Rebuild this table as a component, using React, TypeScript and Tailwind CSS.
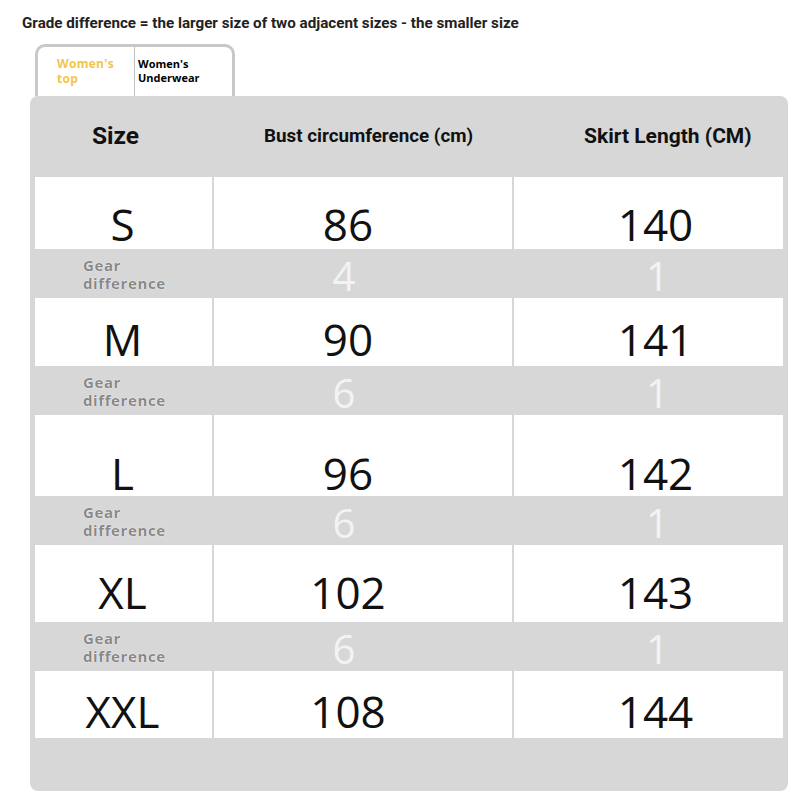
import React from 'react';

type Row = { size: string; bust: string; skirt: string; h: string; pt: string };

const rows: Row[] = [
  { size: 'S', bust: '86', skirt: '140', h: 'h-[72px]', pt: 'pt-[22px]' },
  { size: 'M', bust: '90', skirt: '141', h: 'h-[68px]', pt: 'pt-[14px]' },
  { size: 'L', bust: '96', skirt: '142', h: 'h-[81px]', pt: 'pt-[34px]' },
  { size: 'XL', bust: '102', skirt: '143', h: 'h-[77px]', pt: 'pt-[16px]' },
  { size: 'XXL', bust: '108', skirt: '144', h: 'h-[67px]', pt: 'pt-[12px]' },
];

const gaps = [
  { bust: '4', skirt: '1' },
  { bust: '6', skirt: '1' },
  { bust: '6', skirt: '1' },
  { bust: '6', skirt: '1' },
];

const condensed = { fontFamily: '"Roboto", "Liberation Sans", sans-serif' };

function SizeRow({ row }: { row: Row }) {
  const cell = `flex items-center justify-center bg-white text-[44px] leading-[1] text-[#111] ${row.h} ${row.pt}`;
  return (
    <div className="grid grid-cols-[177px_298px_269px] gap-x-[2px] px-[5px]">
      <div className={`${cell} pr-[2px]`}>{row.size}</div>
      <div className={`${cell} pr-[30px]`}>{row.bust}</div>
      <div className={`${cell} pl-[14px]`}>{row.skirt}</div>
    </div>
  );
}

function GearRow({ bust, skirt }: { bust: string; skirt: string }) {
  return (
    <div className="grid h-[49px] grid-cols-[177px_298px_269px] gap-x-[2px] px-[5px]">
      <div
        className="flex flex-col justify-center pl-[48px] text-[15px] font-bold leading-[18px] tracking-[0.6px] text-[#888]"
        style={{ textShadow: '0 0 1px #fff, 0 0 1px #fff' }}
      >
        <span>Gear</span>
        <span>difference</span>
      </div>
      <div className="flex items-center justify-center pr-[38px] pt-[4px] text-[40px] leading-[1] text-[#f3f3f3]">{bust}</div>
      <div className="flex items-center justify-center pl-[18px] pt-[4px] text-[40px] leading-[1] text-[#f3f3f3]">{skirt}</div>
    </div>
  );
}

export default function App() {
  return (
    <div className="h-[800px] w-[800px] bg-white" style={{ fontFamily: '"Open Sans", "Liberation Sans", sans-serif' }}>
      <div className="pl-[22px] pt-[13px] text-[15.2px] font-bold leading-[20px] text-[#222]" style={condensed}>
        Grade difference = the larger size of two adjacent sizes - the smaller size
      </div>

      <div className="ml-[35px] mt-[11px] flex h-[52px] w-[200px] rounded-t-[10px] border-[3px] border-b-0 border-[#c8c8c8] bg-white">
        <div className="w-[96px] pl-[19px] pt-[9px] text-[12px] font-bold leading-[15px] tracking-[0.3px] text-[#f3c548]">
          Women's
          <br />
          top
        </div>
        <div className="w-px bg-[#c0c0c0]" />
        <div className="pl-[3px] pt-[10px] text-[11px] font-bold leading-[14px] text-black">
          Women's
          <br />
          Underwear
        </div>
      </div>

      <div className="ml-[30px] h-[695px] w-[758px] rounded-[8px] bg-[#d8d7d8]">
        <div className="grid h-[81px] grid-cols-[182px_300px_276px] items-center font-bold text-[#111]" style={condensed}>
          <div className="pl-[62px] text-[24.5px]">Size</div>
          <div className="pl-[52px] text-[18.8px]">Bust circumference (cm)</div>
          <div className="pl-[72px] text-[21px]">Skirt Length (CM)</div>
        </div>
        {rows.map((row, i) => (
          <React.Fragment key={row.size}>
            <SizeRow row={row} />
            {gaps[i] && <GearRow bust={gaps[i].bust} skirt={gaps[i].skirt} />}
          </React.Fragment>
        ))}
      </div>
    </div>
  );
}
